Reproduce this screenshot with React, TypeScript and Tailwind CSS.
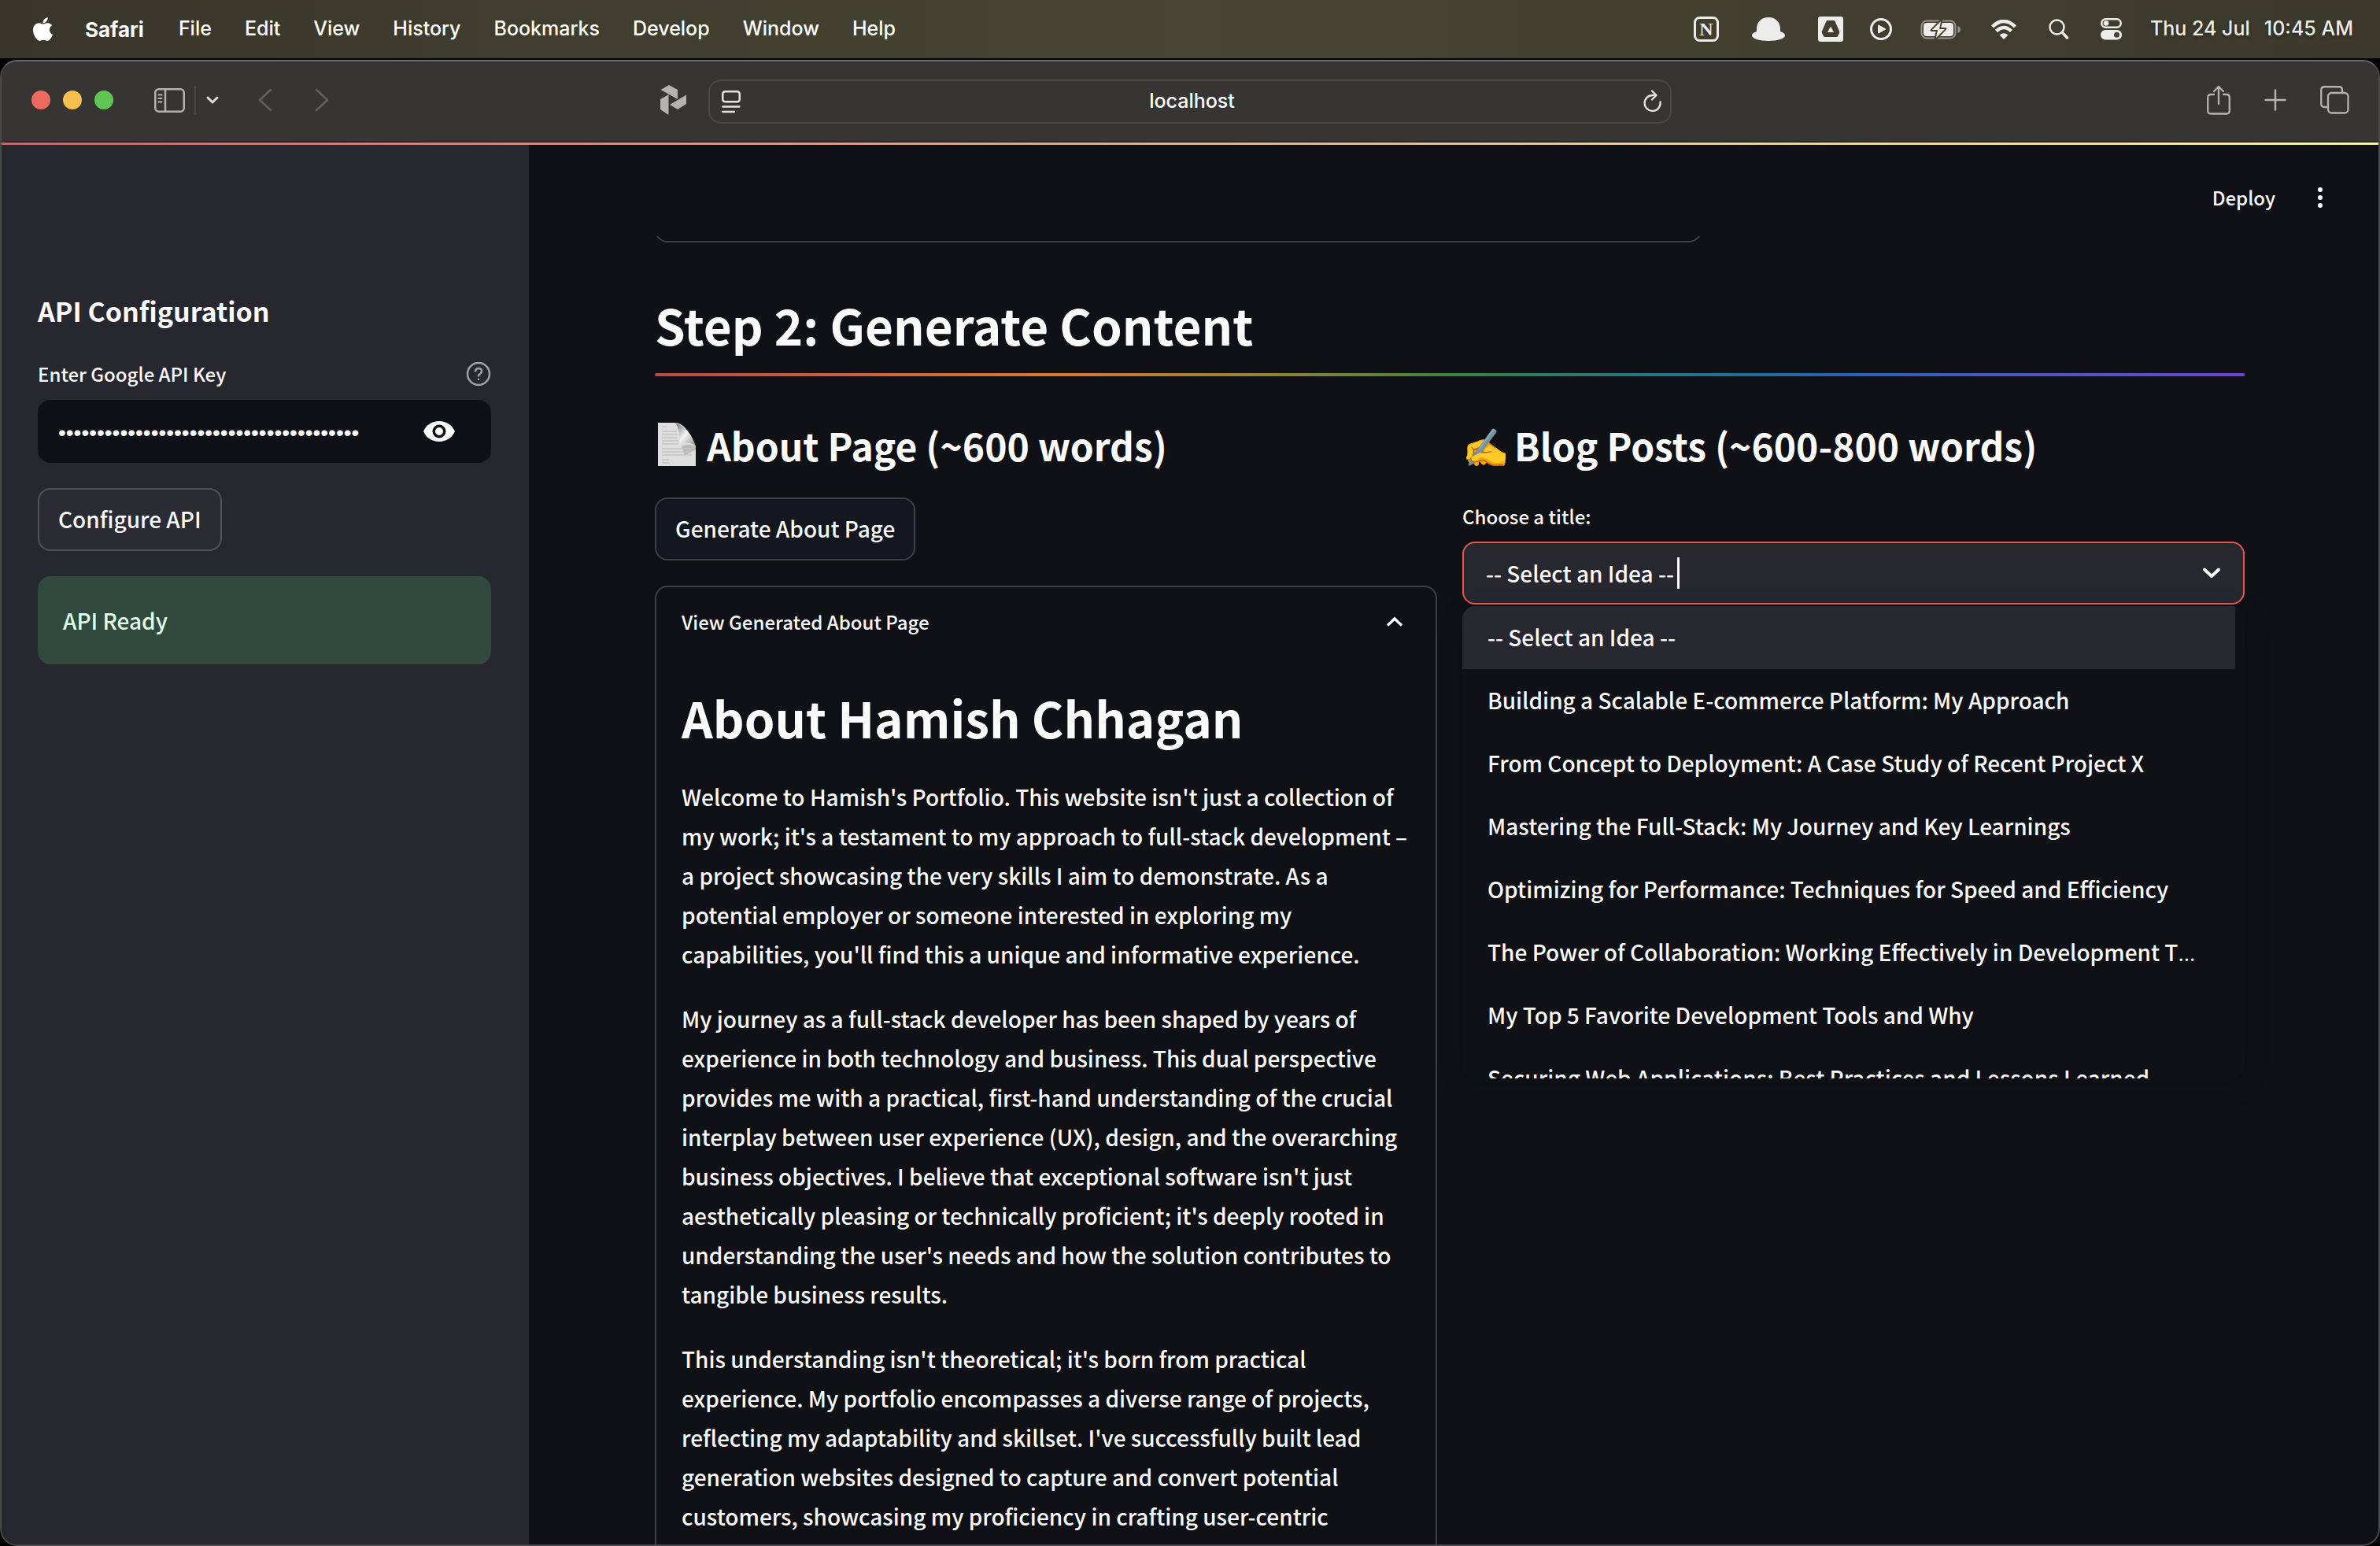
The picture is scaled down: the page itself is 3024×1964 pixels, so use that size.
import type { ReactNode } from "react";
import { FaApple } from "react-icons/fa";

const menus = ["File", "Edit", "View", "History", "Bookmarks", "Develop", "Window", "Help"];

const ideas = [
  "-- Select an Idea --",
  "Building a Scalable E-commerce Platform: My Approach",
  "From Concept to Deployment: A Case Study of Recent Project X",
  "Mastering the Full-Stack: My Journey and Key Learnings",
  "Optimizing for Performance: Techniques for Speed and Efficiency",
  "The Power of Collaboration: Working Effectively in Development T…",
  "My Top 5 Favorite Development Tools and Why",
  "Securing Web Applications: Best Practices and Lessons Learned",
];

const paragraphs = [
  "Welcome to Hamish's Portfolio. This website isn't just a collection of my work; it's a testament to my approach to full-stack development – a project showcasing the very skills I aim to demonstrate. As a potential employer or someone interested in exploring my capabilities, you'll find this a unique and informative experience.",
  "My journey as a full-stack developer has been shaped by years of experience in both technology and business. This dual perspective provides me with a practical, first-hand understanding of the crucial interplay between user experience (UX), design, and the overarching business objectives. I believe that exceptional software isn't just aesthetically pleasing or technically proficient; it's deeply rooted in understanding the user's needs and how the solution contributes to tangible business results.",
  "This understanding isn't theoretical; it's born from practical experience. My portfolio encompasses a diverse range of projects, reflecting my adaptability and skillset. I've successfully built lead generation websites designed to capture and convert potential customers, showcasing my proficiency in crafting user-centric",
];

function Icon({ w, h, children, className = "" }: { w: number; h: number; children: ReactNode; className?: string }) {
  return (
    <svg width={w} height={h} viewBox={`0 0 ${w} ${h}`} fill="none" stroke="currentColor" strokeLinecap="round" strokeLinejoin="round" className={`shrink-0 ${className}`} aria-hidden="true">
      {children}
    </svg>
  );
}

function MenuBar() {
  return (
    <header className="flex h-[74px] shrink-0 items-center bg-linear-to-r from-[#38362b] via-[#474632] to-[#3b392c] pr-[34px] pl-[41px] font-['Inter',sans-serif] text-[25px] font-medium text-white [text-shadow:0_2px_4px_rgba(0,0,0,0.3)]">
      <FaApple className="h-[34px] w-[27px]" aria-label="Apple" />
      <nav className="ml-10 flex items-center gap-[42px]">
        <button className="mr-0.5 text-[26px] font-bold">Safari</button>
        {menus.map((m) => (
          <button key={m}>{m}</button>
        ))}
      </nav>
      <div className="ml-auto flex items-center text-[#ececea]">
        <Icon w={32} h={32}>
          <rect x="1.5" y="1.5" width="29" height="29" rx="6" strokeWidth="3" />
          <text x="16" y="24" textAnchor="middle" fontFamily="Liberation Serif, serif" fontWeight="700" fontSize="24" fill="currentColor" stroke="none">N</text>
        </Icon>
        <Icon w={42} h={30} className="ml-[42px]">
          <path d="M6 18V15C6 6 12 0 21 0S36 6 36 15V18C40 19 42 21 42 23C42 27 33 30 21 30S0 27 0 23C0 21 2 19 6 18Z" fill="currentColor" stroke="none" />
        </Icon>
        <Icon w={32} h={32} className="ml-[42px]">
          <path fillRule="evenodd" d="M3 0H29Q32 0 32 3V29Q32 32 29 32H3Q0 32 0 29V3Q0 0 3 0ZM12 5Q11 5 10.500 6L5 18.500Q4.500 20 5 21L7 25Q7.500 26 9 26H23Q24.500 26 25 25L27 21Q27.500 20 27 18.500L21.500 6Q21 5 20 5ZM16 12.500L20 20H12Z" fill="currentColor" stroke="none" />
        </Icon>
        <Icon w={28} h={28} className="ml-[34px]">
          <circle cx="14" cy="14" r="12.5" strokeWidth="3" />
          <path d="M11 9.500V18.500L19 14Z" fill="currentColor" strokeWidth="2" />
        </Icon>
        <Icon w={51} h={28} className="ml-9">
          <rect x="1.500" y="3.500" width="43" height="22" rx="6.500" strokeWidth="2" opacity="0.5" />
          <path d="M47.500 10V19Q51 17.500 51 14.500T47.500 10Z" fill="currentColor" stroke="none" opacity="0.5" />
          <rect x="4" y="6" width="38" height="17" rx="4" fill="currentColor" stroke="none" />
          <path d="M27 2L14 15.500H21.500L19 27L32 13.500H24.500Z" fill="#ececea" stroke="#444531" strokeWidth="3" />
          <path d="M26 4L15 15H22L20 25L31 14H24Z" fill="currentColor" stroke="none" />
        </Icon>
        <Icon w={34} h={25} className="ml-[38px]">
          <path d="M2.500 9Q17 -5 31.500 9" strokeWidth="4.500" strokeLinecap="butt" />
          <path d="M7.500 14.500Q17 5.500 26.500 14.500" strokeWidth="4.500" strokeLinecap="butt" />
          <path d="M11.500 19.500Q17 15 22.500 19.500L17 25Z" fill="currentColor" stroke="none" />
        </Icon>
        <Icon w={26} h={26} className="ml-10">
          <circle cx="10.500" cy="10.500" r="9" strokeWidth="2.500" />
          <path d="M17.500 17.500L23.500 24" strokeWidth="3.500" />
        </Icon>
        <Icon w={27} h={28} className="ml-10">
          <rect x="1.250" y="1.250" width="24.500" height="10.500" rx="5.250" strokeWidth="2.500" />
          <circle cx="7" cy="6.500" r="3.300" fill="currentColor" stroke="none" />
          <rect x="0" y="15" width="27" height="12.500" rx="6.250" fill="currentColor" stroke="none" />
          <circle cx="20.500" cy="21.250" r="3.500" fill="#43442f" stroke="none" />
        </Icon>
        <time className="ml-9 flex gap-[18px] whitespace-nowrap">
          <span>Thu 24 Jul</span>
          <span>10:45 AM</span>
        </time>
      </div>
    </header>
  );
}

function Toolbar() {
  return (
    <div className="grid h-[102px] shrink-0 grid-cols-[1fr_40.5%_1fr] items-center bg-[#373533] text-[#b4b3b2]">
      <div className="flex items-center pb-1 pl-[38px]">
        <div className="flex gap-4">
          <button aria-label="Close" className="size-6 rounded-full bg-[#ed6a5e]" />
          <button aria-label="Minimise" className="size-6 rounded-full bg-[#f4bf4f]" />
          <button aria-label="Zoom" className="size-6 rounded-full bg-[#61c554]" />
        </div>
        <button aria-label="Sidebar" className="ml-[52px]">
          <Icon w={39} h={31}>
            <rect x="1.250" y="1.250" width="36.500" height="28.500" rx="4.500" strokeWidth="2.500" />
            <path d="M14 1.500V29.500" strokeWidth="2.500" />
            <path d="M5.500 8.500H9.500M5.500 13H9.500M5.500 17.500H9.500" strokeWidth="2" />
          </Icon>
        </button>
        <span className="ml-3 h-9 w-0.5 bg-[#484644]" />
        <button aria-label="Tab groups" className="ml-[13px] text-[#dddcdb]">
          <Icon w={16} h={10}>
            <path d="M2 2L8 8L14 2" strokeWidth="3" />
          </Icon>
        </button>
        <button aria-label="Back" className="ml-[50px] text-[#62605e]">
          <Icon w={18} h={30}>
            <path d="M16 2L2 15L16 28" strokeWidth="2.500" />
          </Icon>
        </button>
        <button aria-label="Forward" className="ml-[54px] text-[#62605e]">
          <Icon w={18} h={30}>
            <path d="M2 2L16 15L2 28" strokeWidth="2.500" />
          </Icon>
        </button>
        <button aria-label="Extension" className="mr-7 ml-auto">
          <Icon w={33} h={38}>
            <path d="M0.500 6L11 0L22 6V18L0.500 6Z M0 18L10.500 12V38L0 31Z M12 25L33 12.500V24L22 31Z" fill="currentColor" stroke="none" />
          </Icon>
        </button>
      </div>
      <div className="flex h-14 items-center rounded-2xl border-2 border-[#4b4947] pr-2.5 pl-[15px] text-[#e4e3e2]">
        <button aria-label="Reader">
          <Icon w={24} h={29}>
            <rect x="1.250" y="1.250" width="21.500" height="13" rx="3" strokeWidth="2.500" />
            <path d="M1.250 20.500H22.500M1.250 27H16" strokeWidth="2.300" />
          </Icon>
        </button>
        <input aria-label="Address" defaultValue="localhost" className="min-w-0 flex-1 bg-transparent text-center font-['Inter',sans-serif] text-[25px] font-medium text-white outline-none" />
        <button aria-label="Reload">
          <Icon w={24} h={30}>
            <path d="M21.500 15.500A10 10 0 1 1 12 7H15.500" strokeWidth="2.300" />
            <path d="M11 1.500L16.500 7L11 12.500" strokeWidth="2.300" />
          </Icon>
        </button>
      </div>
      <div className="flex items-center justify-end pr-[37px]">
        <button aria-label="Share">
          <Icon w={30} h={38} className="mb-1">
            <path d="M9 12H5Q1.250 12 1.250 16V32.500Q1.250 36.500 5 36.500H25Q28.750 36.500 28.750 32.500V16Q28.750 12 25 12H21" strokeWidth="2.300" />
            <path d="M15 24V2M9 8L15 2L21 8" strokeWidth="2.300" />
          </Icon>
        </button>
        <button aria-label="New tab" className="ml-[43px]">
          <Icon w={28} h={28} className="mb-1">
            <path d="M14 1.500V26.500M1.500 14H26.500" strokeWidth="2.500" />
          </Icon>
        </button>
        <button aria-label="Tab overview" className="ml-[43px]">
          <Icon w={37} h={36} className="mb-1">
            <path d="M10 27H5.500Q1.250 27 1.250 23V5.500Q1.250 1.250 5.500 1.250H24Q28 1.250 28 5.500V8.500" strokeWidth="2.300" />
            <rect x="10" y="9" width="25.500" height="25.500" rx="4.500" strokeWidth="2.300" />
          </Icon>
        </button>
      </div>
    </div>
  );
}

function Sidebar() {
  return (
    <aside className="w-[670px] shrink-0 bg-[#27272f] pt-[191px] pr-12 pl-[46px]">
      <h2 className="text-[34px] leading-10 font-semibold">API Configuration</h2>
      <div className="mt-10 flex h-10 items-center justify-between">
        <label htmlFor="api-key" className="text-[24px]">Enter Google API Key</label>
        <button aria-label="Help" className="text-[#a0a0a4]">
          <Icon w={32} h={32}>
            <circle cx="16" cy="16" r="14" strokeWidth="2.500" />
            <path d="M12 12.500Q12.500 9 16 9Q20 9 20 12.500Q20 15 16 17.500V18.500M16 22.800V23" strokeWidth="2.500" />
          </Icon>
        </button>
      </div>
      <div className="mt-[13px] flex h-20 items-center rounded-2xl bg-[#101116] pr-[46px] pl-[26px]">
        <input id="api-key" type="password" defaultValue="AbCdEfGhIjKlMnOpQrStUvWxYz0123456789-_a" className="h-10 min-w-0 flex-1 bg-transparent pt-1 font-['Liberation_Sans',sans-serif] text-[28px] outline-none" />
        <button aria-label="Show password">
          <Icon w={40} h={26}>
            <path fillRule="evenodd" d="M20 0C11 0 3.500 5 0 13C3.500 21 11 26 20 26S36.500 21 40 13C36.500 5 29 0 20 0ZM20 21.500A8.500 8.500 0 1 1 20 4.500A8.500 8.500 0 0 1 20 21.500ZM20 8A5 5 0 1 0 20 18A5 5 0 0 0 20 8Z" fill="currentColor" stroke="none" />
          </Icon>
        </button>
      </div>
      <button className="mt-8 h-20 rounded-2xl border-2 border-[#52525b] bg-[#2b2b34] px-6 pb-0.5 text-[28px]">Configure API</button>
      <div role="status" className="mt-8 flex h-28 items-center rounded-2xl bg-[#32493d] px-8 text-[28px] text-[#dffde9]">API Ready</div>
    </aside>
  );
}

function AboutColumn() {
  return (
    <section>
      <h3 className="flex items-center gap-3 text-[48px] leading-[60px] font-semibold">
        <svg width="54" height="60" viewBox="0 0 54 60" role="img" aria-label="Page" className="shrink-0">
          <defs>
            <linearGradient id="curl" x1="0" y1="0" x2="1" y2="1">
              <stop offset="0" stopColor="#6a6a6a" />
              <stop offset="0.5" stopColor="#f4f4f4" />
              <stop offset="1" stopColor="#8c8c8c" />
            </linearGradient>
          </defs>
          <path d="M4 2H28Q36 4 42 13T52 32V57H4Z" fill="#dedede" />
          <path d="M26 2Q32 10 32 29Q44 25 52 32Q48 20 42 13T26 2Z" fill="url(#curl)" />
          <path d="M34 32Q44 27 52 33V36L38 44Z" fill="#a2a2a2" opacity="0.6" />
          <path d="M9 7H15M9 13H28M9 17H29M9 21H29M9 25H30M9 29H30M9 35H47M9 39H47M9 43H47M9 49H17M9 53H19" stroke="#c4c4c4" strokeWidth="1.500" />
        </svg>
        About Page (~600 words)
      </h3>
      <button className="mt-[37px] h-20 rounded-2xl border-2 border-[#3f4047] bg-[#141720] px-6 pb-0.5 text-[28px]">Generate About Page</button>
      <article className="mt-8 rounded-2xl border-2 border-[#3f4044] px-8 pb-10">
        <button aria-expanded="true" className="flex h-[88px] w-full items-center justify-between text-left text-[24px]">
          View Generated About Page
          <Icon w={24} h={14} className="mr-2">
            <path d="M3 11.500L12 3L21 11.500" strokeWidth="3.500" strokeLinecap="butt" strokeLinejoin="miter" />
          </Icon>
        </button>
        <h1 className="mt-[39px] text-[62px] leading-[76px] font-semibold">About Hamish Chhagan</h1>
        <div className="mt-[38px] space-y-8 text-[28px] leading-[50px]">
          {paragraphs.map((p) => (
            <p key={p.slice(0, 12)}>{p}</p>
          ))}
        </div>
      </article>
    </section>
  );
}

function BlogColumn() {
  return (
    <section>
      <h3 className="flex items-center gap-2.5 text-[48px] leading-[60px] font-semibold">
        <span className="w-14 whitespace-nowrap">✍️</span>
        Blog Posts (~600-800 words)
      </h3>
      <label htmlFor="title" className="mt-[41px] block text-[24px] leading-10">Choose a title:</label>
      <div className="relative mt-3">
        <div className="flex h-20 items-center rounded-2xl border-2 border-[#ea5550] bg-[#27272f] pr-7 pl-7">
          <input id="title" role="combobox" aria-expanded="true" aria-controls="ideas" defaultValue={ideas[0]} className="h-12 bg-transparent text-[28px] outline-none [field-sizing:content]" />
          <span className="ml-1 h-10 w-[3px] bg-white" />
          <Icon w={24} h={14} className="ml-auto">
            <path d="M3 2.500L12 11L21 2.500" strokeWidth="4" />
          </Icon>
        </div>
        <ul id="ideas" role="listbox" className="absolute inset-x-0 top-full mt-0.5 h-[600px] overflow-hidden rounded-2xl bg-[#101116] pr-3 text-[28px] shadow-[0_8px_32px_rgba(0,0,0,0.16)]">
          {ideas.map((idea, i) => (
            <li key={idea} role="option" aria-selected={i === 0} className="h-20 overflow-hidden px-8 leading-[78px] whitespace-nowrap aria-selected:bg-[#27272f]">
              {idea.replace("…", "")}
              {idea.endsWith("…") && <span className="font-['Open_Sans',sans-serif]">…</span>}
            </li>
          ))}
        </ul>
      </div>
    </section>
  );
}

export default function App() {
  return (
    <div className="flex h-screen flex-col overflow-hidden bg-black font-['Noto_Sans_CJK_SC',sans-serif] font-medium text-[#fafafa]">
      <MenuBar />
      <div className="mt-0.5 flex min-h-0 flex-1 flex-col overflow-hidden rounded-[22px] border-2 border-[#4a4a4d] border-t-[#6d6a6b] bg-[#101116]">
        <Toolbar />
        <div className="h-1 shrink-0 border-t border-black bg-linear-to-r from-[#f05a58] to-[#fffd86]" />
        <div className="flex min-h-0 flex-1">
          <Sidebar />
          <main className="flex min-w-0 flex-1 flex-col">
            <div className="flex h-[116px] shrink-0 items-center justify-end gap-[54px] pt-[18px] pr-[71px]">
              <button className="text-[24px]">Deploy</button>
              <button aria-label="Menu">
                <Icon w={6} h={28}>
                  <path d="M3 4V4.010M3 14V14.010M3 24V24.010" strokeWidth="6" />
                </Icon>
              </button>
            </div>
            <div className="min-h-0 flex-1 overflow-hidden pr-[170px] pl-40">
              <div className="h-2 w-[1330px] max-w-full overflow-hidden">
                <div className="-mt-10 h-12 rounded-2xl border-2 border-[#3f4044]" />
              </div>
              <h2 className="mt-[66px] text-[62px] leading-[76px] font-semibold">Step 2: Generate Content</h2>
              <div className="mt-6 h-1 rounded-sm bg-linear-to-r from-[#ba4946] from-0% via-[#e0762f] via-25% to-[#3a823e] to-50%">
                <div className="ml-[50%] h-1 rounded-sm bg-linear-to-r from-[#3a823e] via-[#2462b4] to-[#6a41d6]" />
              </div>
              <div className="mt-[57px] grid grid-cols-2 gap-8">
                <AboutColumn />
                <BlogColumn />
              </div>
            </div>
          </main>
        </div>
      </div>
    </div>
  );
}
